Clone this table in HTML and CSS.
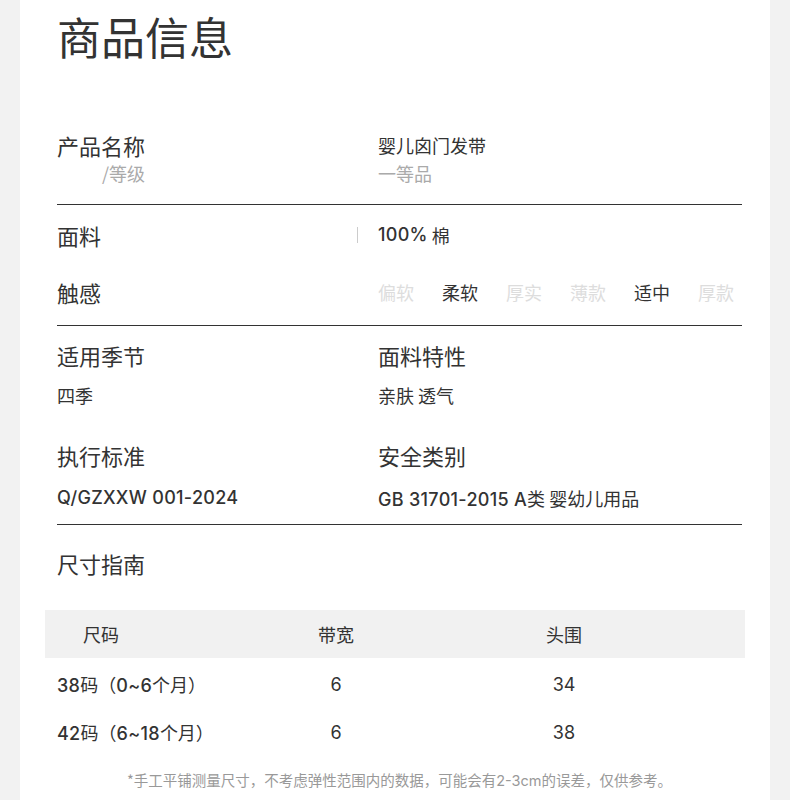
FILE: index.html
```html
<!DOCTYPE html>
<html lang="zh-CN">
<head>
    <meta charset="UTF-8">
    <meta name="viewport" content="width=device-width, initial-scale=1.0">
    <title>商品信息</title>
    <link rel="stylesheet" href="styles.css">
</head>
<body>

<div class="panel">
    <h1 class="title">商品信息</h1>

    <div class="section first">
        <div class="row">
            <div class="label">
                <div>产品名称</div>
                <div class="sub">/等级</div>
            </div>
            <div class="value">
                <div>婴儿囟门发带</div>
                <div class="muted">一等品</div>
            </div>
        </div>
    </div>

    <div class="section">
        <div class="row fabric">
            <div class="label">面料</div>
            <div class="value inline"><span class="sep"></span><span class="latin strong">100%</span>&nbsp;棉</div>
        </div>
        <div class="row touch">
            <div class="label">触感</div>
            <div class="value options">
                <span>偏软</span>
                <span class="on">柔软</span>
                <span>厚实</span>
                <span>薄款</span>
                <span class="on">适中</span>
                <span>厚款</span>
            </div>
        </div>
    </div>

    <div class="section">
        <div class="pair">
            <div class="item">
                <div class="label">适用季节</div>
                <div class="desc">四季</div>
            </div>
            <div class="item">
                <div class="label">面料特性</div>
                <div class="desc">亲肤 透气</div>
            </div>
        </div>
        <div class="pair second">
            <div class="item">
                <div class="label">执行标准</div>
                <div class="desc latin strong">Q/GZXXW 001-2024</div>
            </div>
            <div class="item">
                <div class="label">安全类别</div>
                <div class="desc"><span class="latin strong">GB 31701-2015 A</span>类 婴幼儿用品</div>
            </div>
        </div>
    </div>

    <h2 class="label size-title">尺寸指南</h2>

    <div class="size-table">
        <div class="size-row head">
            <div class="c1">尺码</div>
            <div class="c2">带宽</div>
            <div class="c3">头围</div>
        </div>
        <div class="size-row">
            <div class="c1"><span class="latin strong">38</span>码（<span class="latin strong">0~6</span>个月）</div>
            <div class="c2 latin">6</div>
            <div class="c3 latin">34</div>
        </div>
        <div class="size-row">
            <div class="c1"><span class="latin strong">42</span>码（<span class="latin strong">6~18</span>个月）</div>
            <div class="c2 latin">6</div>
            <div class="c3 latin">38</div>
        </div>
    </div>

    <p class="note">*手工平铺测量尺寸，不考虑弹性范围内的数据，可能会有<span class="latin">2-3cm</span>的误差，仅供参考。</p>
</div>

</body>
</html>
```

FILE: styles.css
```css
body {
    margin: 0;
    background-color: #f2f2f2;
    font-family: "Noto Sans CJK SC", sans-serif;
    color: #333;
}
.panel {
    margin: 0 20px;
    min-height: 800px;
    padding: 0 28px 0 37px;
    background-color: #fff;
    box-sizing: border-box;
    overflow: hidden;
}
.latin {
    font-family: Inter, "Noto Sans CJK SC", sans-serif;
}
.strong {
    font-weight: 500;
    letter-spacing: 0.3px;
}
.title {
    margin: 0;
    font-size: 44px;
    font-weight: 400;
    line-height: 72px;
    color: #333;
}
.section {
    border-bottom: 1px solid #333;
}
.section.first {
    margin-top: 59px;
    padding-bottom: 17px;
}
.row {
    display: grid;
    grid-template-columns: 300px 1fr;
}
.label {
    font-size: 22px;
    line-height: 28px;
    font-weight: 400;
    color: #333;
}
.label .sub {
    width: 88px;
    text-align: right;
    font-size: 18px;
    color: #aaa;
}
.value {
    padding-left: 21px;
    font-size: 18px;
    line-height: 28px;
    color: #333;
}
.value .muted {
    color: #aaa;
}
.value.inline {
    display: flex;
    align-items: center;
}
.sep {
    width: 1px;
    height: 16px;
    margin-left: -21px;
    margin-right: 20px;
    background-color: #ccc;
}
.fabric {
    margin-top: 16px;
}
.touch {
    margin-top: 29px;
    padding-bottom: 19px;
}
.options {
    display: flex;
    gap: 28px;
    color: #ddd;
}
.options .on {
    color: #333;
}
.pair {
    display: grid;
    grid-template-columns: 321px 1fr;
    margin-top: 15px;
}
.pair.second {
    margin-top: 32px;
    padding-bottom: 10px;
}
.desc {
    margin-top: 12px;
    font-size: 18px;
    line-height: 28px;
    color: #333;
}
.pair.second .desc {
    margin-top: 15px;
}
.size-title {
    margin: 24px 0 0;
}
.size-table {
    margin: 33px -3px 0 -12px;
    font-size: 18px;
    color: #333;
}
.size-row {
    display: grid;
    grid-template-columns: 182px 218px 238px 1fr;
    height: 48px;
    align-items: center;
}
.size-row.head {
    margin-bottom: 2px;
    background-color: #f1f1f1;
}
.size-row .c1 {
    padding-left: 12px;
}
.size-row.head .c1 {
    padding-left: 38px;
}
.size-row .c2,
.size-row .c3 {
    text-align: center;
}
.note {
    margin: 14px 0 0;
    font-size: 14.5px;
    line-height: 20px;
    text-align: center;
    color: #999;
}
```
